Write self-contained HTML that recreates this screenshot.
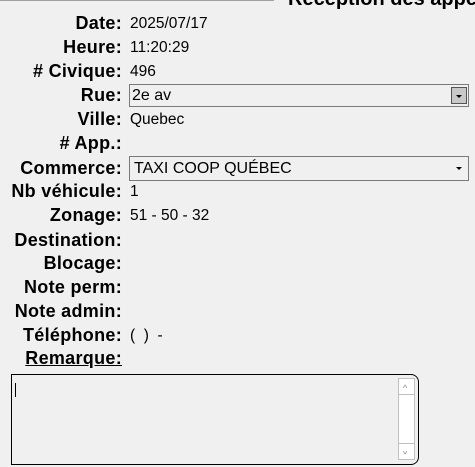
<!DOCTYPE html>
<html><head><meta charset="utf-8"><style>
html,body{margin:0;padding:0;background:#f0f0f0;width:475px;height:467px;overflow:hidden;position:relative;font-family:"Liberation Sans",Arial,sans-serif;color:#000}
.l{position:absolute;right:353px;font-weight:bold;font-size:18px;letter-spacing:0.3px;white-space:nowrap;line-height:18px}
.v{position:absolute;left:130px;font-size:15.5px;line-height:18px;white-space:nowrap;margin-top:1px}
.sel{position:absolute;left:129px;width:340px;border:1px solid #7a7a7a;box-sizing:border-box;font-size:16px}
</style></head><body>
<div style="position:absolute;left:0;top:0;width:274px;height:1px;background:#a0a0a0"></div>
<div style="position:absolute;left:288px;top:-12px;font-weight:bold;font-size:20px;white-space:nowrap">Réception des appels</div>

<div class="l" style="top:14px">Date:</div><div class="v" style="top:14px">2025/07/17</div>
<div class="l" style="top:38px">Heure:</div><div class="v" style="top:38px">11:20:29</div>
<div class="l" style="top:62px"># Civique:</div><div class="v" style="top:62px">496</div>
<div class="l" style="top:86px">Rue:</div>
<div class="sel" style="top:84px;height:23px;background:#f0f0f0;">
 <span style="position:absolute;left:2px;top:2px;line-height:18px">2e av</span>
 <div style="position:absolute;right:1px;top:2px;width:16px;height:17px;background:#c8c8c8;border:1px solid #555;box-sizing:border-box"><div style="position:absolute;left:4px;top:7px;border-left:3px solid transparent;border-right:3px solid transparent;border-top:3px solid #000"></div></div>
</div>
<div class="l" style="top:110px">Ville:</div><div class="v" style="top:110px">Quebec</div>
<div class="l" style="top:134px"># App.:</div>
<div class="l" style="top:159px">Commerce:</div>
<div class="sel" style="top:156px;height:25px;background:#f0f0f0;">
 <span style="position:absolute;left:4px;top:3px;line-height:18px">TAXI COOP QUÉBEC</span>
 <div style="position:absolute;right:6px;top:10px;border-left:3px solid transparent;border-right:3px solid transparent;border-top:3px solid #000"></div>
</div>
<div class="l" style="top:182px">Nb véhicule:</div><div class="v" style="top:182px">1</div>
<div class="l" style="top:206px">Zonage:</div><div class="v" style="top:206px">51 - 50 - 32</div>
<div class="l" style="top:231px">Destination:</div>
<div class="l" style="top:254px">Blocage:</div>
<div class="l" style="top:278px">Note perm:</div>
<div class="l" style="top:302px">Note admin:</div>
<div class="l" style="top:326px">Téléphone:</div><div class="v" style="top:326px">(&nbsp;&nbsp;)&nbsp;&nbsp;-</div>
<div class="l" style="top:349px;text-decoration:underline">Remarque:</div>

<div style="position:absolute;left:11px;top:374px;width:408px;height:91px;border:1px solid #000;border-radius:0 8px 8px 0;box-sizing:border-box">
 <div style="position:absolute;left:3px;top:8px;width:1px;height:14px;background:#000"></div>
 <div style="position:absolute;left:386px;top:3px;width:17px;height:82px;background:#fff;border:1px solid #c0c0c0;box-sizing:border-box">
  <div style="position:absolute;left:0;top:15px;width:15px;height:1px;background:#c0c0c0"></div>
  <div style="position:absolute;left:0;bottom:15px;width:15px;height:1px;background:#c0c0c0"></div>
  <div style="position:absolute;left:4px;top:5px;font-size:9px;color:#888;line-height:8px">^</div>
  <div style="position:absolute;left:4px;bottom:4px;font-size:9px;color:#888;line-height:8px;transform:scaleY(-1)">^</div>
 </div>
</div>
</body></html>
